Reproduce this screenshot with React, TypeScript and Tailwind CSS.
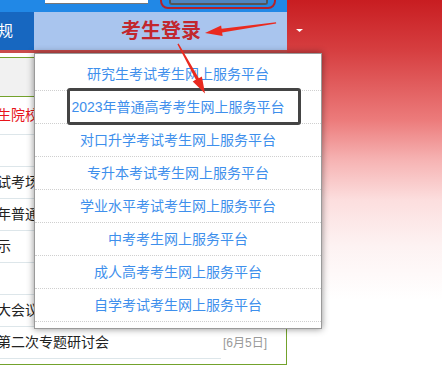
import React from "react";

const platforms = [
  "研究生考试考生网上服务平台",
  "2023年普通高考考生网上服务平台",
  "对口升学考试考生网上服务平台",
  "专升本考试考生网上服务平台",
  "学业水平考试考生网上服务平台",
  "中考考生网上服务平台",
  "成人高考考生网上服务平台",
  "自学考试考生网上服务平台",
];

// 左侧新闻列表（大部分被下拉菜单遮住）
const news = [
  { text: "生院校信息查询", red: true },
  { text: "" },
  { text: "试考场安排通知" },
  { text: "年普通高校招生" },
  { text: "示" },
  { text: "" },
  { text: "大会议召开" },
  { text: "第二次专题研讨会", date: "[6月5日]" },
];

export default function App() {
  return (
    <div
      className="relative w-[442px] h-[368px] overflow-hidden bg-[linear-gradient(180deg,#c81d21_0px,#d63e40_50px,#ec7b7b_120px,#f6b3b3_160px,#fcdede_200px,#fdf2f2_245px,#ffffff_300px)]"
      style={{ fontFamily: '"Liberation Sans", "Noto Sans CJK SC", sans-serif' }}
    >
      <div className="w-[287px] flex flex-col">
        {/* 顶部条 */}
        <div className="h-[12px] bg-[#2188e6] flex items-start">
          <div className="ml-[45px] w-[103px] h-[4px] bg-white border-b border-[#777]" />
          <div className="ml-[21px] w-[99px] h-[5px] bg-[#4f86c0] border-2 border-t-0 border-[#555] rounded-b-[3px]" />
        </div>

        {/* 导航 */}
        <div className="h-[38px] flex">
          <div className="w-[34px] bg-[#1767c0] flex items-center text-white text-[15px] overflow-hidden">
            <span className="-ml-[2px]">规</span>
          </div>
          <div className="flex-1 bg-[#a9c5ee] flex items-center pl-[87px]">
            <span className="text-[20px] font-bold text-[#c2272e]">考生登录</span>
          </div>
        </div>
        <div className="h-[3px] bg-[#c94b4b]" />

        {/* 左侧内容 */}
        <div className="bg-white pt-[4px]">
          <div className="-ml-[10px] border border-[#73a22c] bg-white">
            <div className="h-[39px] bg-[#f1f1f1] border-b border-[#73a22c]" />
            <div className="flex flex-col">
              {news.map((n, i) => (
                <div key={i} className={`flex items-center ${i === 0 ? "h-[38px]" : "h-[32px]"}`}>
                  <div className="w-[230px] h-full flex items-center border-b border-[#dde6ea] pl-[6px] text-[14px] whitespace-nowrap overflow-hidden">
                    <span className={n.red ? "text-[#e8141b]" : "text-[#222]"}>{n.text}</span>
                  </div>
                  {n.date && <span className="ml-[2px] text-[12px] text-[#999]">{n.date}</span>}
                </div>
              ))}
            </div>
            <div className="h-[5px]" />
          </div>
          <div className="flex gap-[5px] mt-[3px]">
            <div className="w-[22px] h-[4px] bg-[#2f8de4]" />
            <div className="w-[70px] h-[4px] bg-[#2f8de4]" />
          </div>
        </div>
      </div>

      {/* 下拉菜单 */}
      <div className="absolute left-[34px] top-[53px] w-[288px] h-[276px] bg-white border border-[#9a9a9a] shadow-[0_0_7px_rgba(0,0,0,0.45)] pt-[4px]">
        {platforms.map((p) => (
          <div
            key={p}
            className="h-[33px] flex items-center justify-center border-b border-dotted border-[#cfcfcf] text-[14px] text-[#3e8fec] whitespace-nowrap"
          >
            {p}
          </div>
        ))}
      </div>

      {/* 标注 */}
      <div className="absolute left-[67px] top-[88px] w-[234px] h-[37px] border-[3px] border-[#444] rounded-[3px]" />
      <div className="absolute left-[160px] -top-[10px] w-[116px] h-[19px] border-2 border-[#b3232a] rounded-[8px]" />

      <svg className="absolute left-0 top-0" width="442" height="368" viewBox="0 0 442 368">
        <polygon points="296,29 303,29 299.5,32" fill="#ffffff" />
        <polygon
          points="276,22.3 221.6,28.8 221.1,25.6 205,33 222.6,35.9 222.1,32.6 276.2,23.6"
          fill="#ea2a1f"
        />
        <polygon
          points="178.6,43.6 198.8,78.2 201.9,76.4 205,93.5 192.7,81.5 195.9,79.8 177.4,44.3"
          fill="#ea2a1f"
        />
      </svg>
    </div>
  );
}
